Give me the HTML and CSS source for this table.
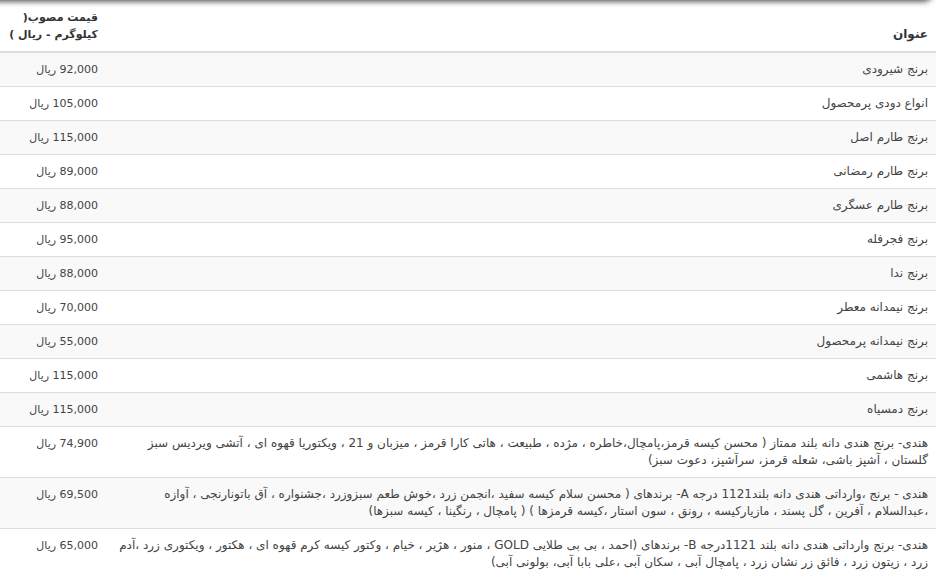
FILE: index.html
```html
<!DOCTYPE html>
<html lang="fa" dir="rtl">
<head>
<meta charset="utf-8">
<title>قیمت برنج</title>
<link rel="stylesheet" href="styles.css">
</head>
<body>
<div class="top-shadow"></div>
<div class="page">
<table class="price-table">
  <thead>
    <tr>
      <th class="col-title">عنوان</th>
      <th class="col-price">قیمت مصوب(<br>کیلوگرم - ریال )</th>
    </tr>
  </thead>
  <tbody>
    <tr><td class="col-title">برنج شیرودی</td><td class="col-price">92,000 ریال</td></tr>
    <tr><td class="col-title">انواع دودی پرمحصول</td><td class="col-price">105,000 ریال</td></tr>
    <tr><td class="col-title">برنج طارم اصل</td><td class="col-price">115,000 ریال</td></tr>
    <tr><td class="col-title">برنج طارم رمضانی</td><td class="col-price">89,000 ریال</td></tr>
    <tr><td class="col-title">برنج طارم عسگری</td><td class="col-price">88,000 ریال</td></tr>
    <tr><td class="col-title">برنج فجرفله</td><td class="col-price">95,000 ریال</td></tr>
    <tr><td class="col-title">برنج ندا</td><td class="col-price">88,000 ریال</td></tr>
    <tr><td class="col-title">برنج نیمدانه معطر</td><td class="col-price">70,000 ریال</td></tr>
    <tr><td class="col-title">برنج نیمدانه پرمحصول</td><td class="col-price">55,000 ریال</td></tr>
    <tr><td class="col-title">برنج هاشمی</td><td class="col-price">115,000 ریال</td></tr>
    <tr><td class="col-title">برنج دمسیاه</td><td class="col-price">115,000 ریال</td></tr>
    <tr><td class="col-title">هندی- برنج هندی دانه بلند ممتاز ( محسن کیسه قرمز،پامچال،خاطره ، مژده ، طبیعت ، هاتی کارا قرمز ، میزبان و 21 ، ویکتوریا قهوه ای ، آتشی ویردیس سبز گلستان ، آشپز باشی، شعله قرمز، سرآشپز، دعوت سبز)</td><td class="col-price">74,900 ریال</td></tr>
    <tr><td class="col-title">هندی - برنج ،وارداتی هندی دانه بلند1121 درجه A- برندهای ( محسن سلام کیسه سفید ،انجمن زرد ،خوش طعم سبزوزرد ،جشنواره ، آق باتونارنجی ، آوازه ،عبدالسلام ، آفرین ، گل پسند ، مازیارکیسه ، رونق ، سون استار ،کیسه قرمزها ) ( پامچال ، رنگینا ، کیسه سبزها)</td><td class="col-price">69,500 ریال</td></tr>
    <tr><td class="col-title">هندی- برنج وارداتی هندی دانه بلند 1121درجه B- برندهای (احمد ، بی بی طلایی GOLD ، منور ، هژیر ، خیام ، وکتور کیسه کرم قهوه ای ، هکتور ، ویکتوری زرد ،آدم زرد ، زیتون زرد ، فائق زر نشان زرد ، پامچال آبی ، سکان آبی ،علی بابا آبی، بولونی آبی)</td><td class="col-price">65,000 ریال</td></tr>
  </tbody>
</table>
</div>
</body>
</html>
```
FILE: styles.css
```css
html, body {
  margin: 0;
  padding: 0;
  background: #fff;
}
body {
  font-family: Tahoma, "DejaVu Sans", sans-serif;
  font-size: 11px;
  line-height: 17px;
  color: #444;
}
.top-shadow {
  position: fixed;
  top: -12px;
  left: -12px;
  width: 944px;
  height: 12px;
  background: #fff;
  border-radius: 0 0 8px 0;
  box-shadow: 0 1px 6px rgba(0, 0, 0, 0.8);
  z-index: 2;
}
.page {
  margin-right: 8px;
  padding-top: 1px;
}
.price-table {
  width: 100%;
  border-collapse: collapse;
  border-spacing: 0;
}
.price-table th,
.price-table td {
  padding: 8px;
  text-align: right;
}
.price-table th {
  font-weight: bold;
  color: #333;
  vertical-align: bottom;
  border-bottom: 2px solid #ddd;
}
.price-table th.col-title {
  font-size: 12px;
}
.price-table td {
  vertical-align: top;
  border-top: 1px solid #ddd;
  font-size: 12px;
}
.price-table tbody tr:first-child td {
  border-top: 0;
}
.price-table tbody tr:nth-child(odd) td {
  background: #f9f9f9;
}
.price-table td.col-title {
  padding-left: 10px;
}
.price-table .col-price {
  width: 90px;
  white-space: nowrap;
}
.price-table td.col-price {
  font-size: 11px;
}
```
